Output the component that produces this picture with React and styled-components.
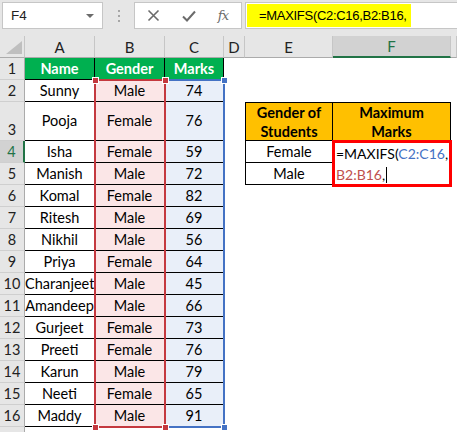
import React from "react";
import styled, { createGlobalStyle } from "styled-components";

const GlobalStyle = createGlobalStyle`
  html, body { margin: 0; padding: 0; background: #fff; }
  body { font-family: Lato, "Liberation Sans", sans-serif; }
`;

const COLS = [
  { key: "A", w: 70 },
  { key: "B", w: 70 },
  { key: "C", w: 59 },
  { key: "D", w: 21 },
  { key: "E", w: 88 },
  { key: "F", w: 118 },
  { key: "G", w: 6 },
];

const people = [
  ["Sunny", "Male", 74],
  ["Pooja", "Female", 76],
  ["Isha", "Female", 59],
  ["Manish", "Male", 72],
  ["Komal", "Female", 82],
  ["Ritesh", "Male", 69],
  ["Nikhil", "Male", 56],
  ["Priya", "Female", 64],
  ["Charanjeet", "Male", 45],
  ["Amandeep", "Male", 66],
  ["Gurjeet", "Female", 73],
  ["Preeti", "Female", 76],
  ["Karun", "Male", 79],
  ["Neeti", "Female", 65],
  ["Maddy", "Male", 91],
];

const ROW_HEIGHTS = { 3: 39 };
const ROWS = Array.from({ length: 17 }, (_, i) => i + 1);

const Window = styled.div`
  width: 457px;
  height: 432px;
  overflow: hidden;
  background: #fff;
`;

const Toolbar = styled.div`
  height: 36px;
  box-sizing: border-box;
  padding: 2px 0 0 2px;
  background: #e6e6e6;
  display: flex;
  align-items: flex-start;
`;

const Box = styled.div`
  box-sizing: border-box;
  height: 27px;
  background: #fff;
  border: 1px solid #c6c6c6;
  display: flex;
  align-items: center;
`;

const NameBox = styled(Box)`
  width: 101px;
  padding: 0 8px 0 8px;
  justify-content: space-between;
  font-family: "Liberation Sans", Arial, sans-serif;
  font-size: 13.5px;
  color: #222;
`;

const Caret = styled.span`
  width: 0;
  height: 0;
  border-left: 4px solid transparent;
  border-right: 4px solid transparent;
  border-top: 4px solid #6b6b6b;
`;

const Grip = styled.div`
  width: 31px;
  height: 27px;
  display: flex;
  flex-direction: column;
  align-items: center;
  justify-content: center;
  gap: 3px;
`;

const Dot = styled.span`
  width: 2px;
  height: 2px;
  background: #a6a6a6;
`;

const ButtonsBox = styled(Box)`
  width: 108px;
  padding: 0 13px 0 12px;
  justify-content: space-between;
`;

const Fx = styled.span`
  font-family: "DejaVu Serif", "Liberation Serif", serif;
  font-style: italic;
  font-size: 13px;
  color: #6b6b6b;
  letter-spacing: -1px;
`;

const FormulaBox = styled(Box)`
  flex: 1;
  margin-left: 3px;
  margin-right: -2px;
  padding: 1px;
  align-items: stretch;
`;

const Highlight = styled.div`
  width: 164px;
  background: #ffff00;
  padding-left: 12px;
  box-sizing: border-box;
  display: flex;
  align-items: center;
  font-family: "Liberation Sans", Arial, sans-serif;
  font-size: 13px;
  letter-spacing: -0.3px;
  color: #000;
`;

const Sheet = styled.div`
  position: relative;
  display: grid;
  grid-template-columns: 25px ${COLS.map((c) => c.w + "px").join(" ")};
  grid-template-rows: 22px ${ROWS.map((r) => (ROW_HEIGHTS[r] || 22) + "px").join(" ")};
`;

const ColHead = styled.div`
  box-sizing: border-box;
  display: flex;
  align-items: center;
  justify-content: center;
  overflow: hidden;
  background: ${(p) => (p.$active ? "#d2d2d2" : "#e6e6e6")};
  color: ${(p) => (p.$active ? "#217346" : "#222")};
  border-right: 1px solid #c6c6c6;
  border-bottom: ${(p) => (p.$active ? "2px solid #217346" : "1px solid #ababab")};
  font-size: 15px;
  position: relative;
`;

const CornerMark = styled.svg`
  position: absolute;
  right: 2px;
  bottom: 3px;
`;

const RowHead = styled.div`
  box-sizing: border-box;
  display: flex;
  align-items: flex-end;
  justify-content: center;
  padding-bottom: 2px;
  background: ${(p) => (p.$active ? "#d2d2d2" : "#e6e6e6")};
  color: ${(p) => (p.$active ? "#217346" : "#222")};
  border-bottom: 1px solid #cfcfcf;
  border-right: ${(p) => (p.$active ? "2px solid #217346" : "1px solid #ababab")};
  font-size: 14.5px;
`;

const edge = (p, side) => (p.$edges && p.$edges.includes(side) ? "1px solid #000" : "none");

const Cell = styled.div`
  box-sizing: border-box;
  min-width: 0;
  overflow: hidden;
  display: flex;
  align-items: center;
  background: ${(p) => p.$fill || "#fff"};
  color: ${(p) => p.$color || "#000"};
  font-weight: ${(p) => (p.$bold ? 700 : 400)};
  font-size: 14.5px;
  border-top: ${(p) => edge(p, "t")};
  border-right: ${(p) => edge(p, "r")};
  border-bottom: ${(p) => edge(p, "b")};
  border-left: ${(p) => edge(p, "l")};
`;

const Label = styled.span`
  display: block;
  width: 100%;
  text-align: center;
  white-space: ${(p) => (p.$wrap ? "pre-line" : "nowrap")};
  line-height: ${(p) => (p.$wrap ? "19px" : "18px")};
  overflow: hidden;
`;

const Range = styled.div`
  position: absolute;
  box-sizing: border-box;
  border: 2px solid ${(p) => p.$color};
  border-left-width: ${(p) => (p.$noLeft ? 0 : 2)}px;
  pointer-events: none;
`;

const Handle = styled.span`
  position: absolute;
  width: 5px;
  height: 5px;
  margin: -3px 0 0 -3px;
  background: ${(p) => p.$color};
  border: 1px solid #fff;
`;

const Editor = styled.div`
  position: absolute;
  left: 332px;
  top: 104px;
  width: 120px;
  height: 47px;
  box-sizing: border-box;
  border: 3px solid #ff0000;
  background: #fff;
  padding: 0 0 0 1px;
  font-size: 14px;
  line-height: 21px;
  white-space: nowrap;
  color: #000;
`;

const Ref = styled.span`
  color: ${(p) => p.$color};
`;

const Caret2 = styled.span`
  display: inline-block;
  width: 1px;
  height: 16px;
  margin-left: 1px;
  background: #000;
  vertical-align: -3px;
`;

const GREEN = "#00b050";
const PINK = "#fbe6e7";
const BLUE = "#e9eff9";
const GOLD = "#ffc000";
const RED = "#c4393f";
const BLUE_LINE = "#4472c4";

function cellFor(r, key) {
  if (["A", "B", "C"].includes(key)) {
    if (r === 1) {
      const text = { A: "Name", B: "Gender", C: "Marks" }[key];
      return { text, fill: GREEN, color: "#fff", bold: true, edges: "rb" };
    }
    if (r >= 2 && r <= 16) {
      const row = people[r - 2];
      const idx = { A: 0, B: 1, C: 2 }[key];
      const fill = key === "B" ? PINK : key === "C" ? BLUE : "#fff";
      return { text: String(row[idx]), fill, edges: "rb" };
    }
  }
  if (key === "E" && r >= 3 && r <= 5) {
    if (r === 3) return { text: "Gender of\nStudents", fill: GOLD, bold: true, wrap: true, edges: "tlrb" };
    return { text: r === 4 ? "Female" : "Male", edges: "lrb" };
  }
  if (key === "F" && r >= 3 && r <= 5) {
    if (r === 3) return { text: "Maximum\nMarks", fill: GOLD, bold: true, wrap: true, edges: "trb" };
    return { text: "", edges: "rb" };
  }
  return { text: "" };
}

const handles = [
  { x: 95, y: 44, c: RED },
  { x: 165, y: 44, c: RED },
  { x: 95, y: 391, c: RED },
  { x: 165, y: 391, c: RED },
  { x: 224, y: 44, c: BLUE_LINE },
  { x: 224, y: 391, c: BLUE_LINE },
];

const XIcon = () => (
  <svg width="13" height="13" viewBox="0 0 13 13">
    <path d="M1.5 1.5 L11.5 11.5 M11.5 1.5 L1.5 11.5" stroke="#6b6b6b" strokeWidth="1.6" fill="none" />
  </svg>
);

const CheckIcon = () => (
  <svg width="14" height="12" viewBox="0 0 14 12">
    <path d="M1 6.5 L5 10.5 L13 1.5" stroke="#6b6b6b" strokeWidth="2" fill="none" />
  </svg>
);

export default function App() {
  return (
    <Window>
      <GlobalStyle />
      <Toolbar>
        <NameBox>
          F4
          <Caret />
        </NameBox>
        <Grip>
          <Dot />
          <Dot />
          <Dot />
        </Grip>
        <ButtonsBox>
          <XIcon />
          <CheckIcon />
          <Fx>fx</Fx>
        </ButtonsBox>
        <FormulaBox>
          <Highlight>=MAXIFS(C2:C16,B2:B16,</Highlight>
        </FormulaBox>
      </Toolbar>

      <Sheet>
        <ColHead>
          <CornerMark width="16" height="13" viewBox="0 0 16 13">
            <polygon points="16,0 16,13 0,13" fill="#bfbfbf" />
          </CornerMark>
        </ColHead>
        {COLS.map((c) => (
          <ColHead key={c.key} $active={c.key === "F"}>
            {c.key === "G" ? "" : c.key}
          </ColHead>
        ))}

        {ROWS.map((r) => (
          <React.Fragment key={r}>
            <RowHead $active={r === 4}>{r <= 16 ? r : ""}</RowHead>
            {COLS.map((c) => {
              const cell = cellFor(r, c.key);
              return (
                <Cell
                  key={c.key}
                  $fill={cell.fill}
                  $color={cell.color}
                  $bold={cell.bold}
                  $edges={cell.edges}
                >
                  <Label $wrap={cell.wrap}>{cell.text}</Label>
                </Cell>
              );
            })}
          </React.Fragment>
        ))}

        <Range $color={RED} style={{ left: 94, top: 43, width: 72, height: 349 }} />
        <Range $color={BLUE_LINE} $noLeft style={{ left: 166, top: 43, width: 59, height: 349 }} />
        {handles.map((h, i) => (
          <Handle key={i} $color={h.c} style={{ left: h.x, top: h.y }} />
        ))}

        <Editor>
          =MAXIFS(<Ref $color="#4472c4">C2:C16</Ref>,
          <br />
          <Ref $color="#c0504d">B2:B16</Ref>,<Caret2 />
        </Editor>
      </Sheet>
    </Window>
  );
}
